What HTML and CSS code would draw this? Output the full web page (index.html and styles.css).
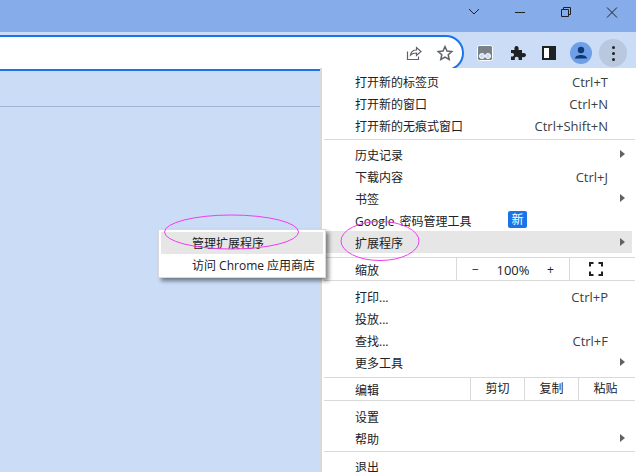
FILE: index.html
```html
<!DOCTYPE html>
<html lang="zh-CN">
<head>
    <meta charset="UTF-8">
    <title>扩展程序</title>
    <link rel="stylesheet" href="styles.css">
</head>

<body>
    <div class="titlebar">
        <svg class="win-icon" width="46" height="32" viewBox="0 0 46 32"><path d="M18 9l5 5 5-5" /></svg>
        <svg class="win-icon" width="46" height="32" viewBox="0 0 46 32"><path d="M18 12.500h10" /></svg>
        <svg class="win-icon" width="46" height="32" viewBox="0 0 46 32"><path d="M18.500 9.500h7v7h-7zM20.500 9.500v-2h7v7h-2" /></svg>
        <svg class="win-icon" width="46" height="32" viewBox="0 0 46 32"><path d="M18 7.500l10 10M28 7.500l-10 10" /></svg>
    </div>

    <div class="toolbar">
        <div class="omnibox">
            <svg class="omni-icon" width="18" height="18" viewBox="0 0 18 18"><path d="M3.500 7.500v8h11v-3M6.500 11c.5-3 3-5 6-5V3.500l4.500 4-4.500 4V9c-2.500 0-4.500.5-6 2z" /></svg>
            <svg class="omni-icon star" width="18" height="18" viewBox="0 0 18 18"><path d="M9 2.500l2 4.500 4.800.5-3.600 3.200 1 4.800L9 13l-4.200 2.500 1-4.800L2.200 7.500 7 7z" /></svg>
        </div>
        <div class="tools">
            <svg class="ext-tab" width="16" height="16" viewBox="0 0 16 16">
                <rect x="0.500" y="0.500" width="15" height="15" rx="2" fill="#7c8087" stroke="#fff" />
                <circle cx="5" cy="11" r="2.500" fill="#cadcf6" stroke="#fff" />
                <circle cx="11" cy="11" r="2.500" fill="#cadcf6" stroke="#fff" />
            </svg>
            <svg class="puzzle" width="16" height="16" viewBox="0 0 16 16"><path fill="#202124" d="M1 5h3.500C4 2.500 5 1 6.500 1S9 2.500 8.500 5H12v3.200c2.500-.6 4 .4 4 1.900s-1.500 2.500-4 1.900V15H8.500c.6-2.300-.4-3.200-1.800-3.200S4.300 12.700 5 15H1v-3.500c2 .4 3-.5 3-1.700S3 7.700 1 8.200z" /></svg>
            <div class="side-panel"></div>
            <div class="avatar">
                <svg width="22" height="22" viewBox="0 0 22 22"><circle cx="11" cy="8" r="3.200" fill="#0d3a74" /><path fill="#0d3a74" d="M5 16.500c0-2.500 3.500-3.500 6-3.500s6 1 6 3.500z" /></svg>
            </div>
            <div class="menu-btn"><span></span><span></span><span></span></div>
        </div>
    </div>

    <div class="content">
        <div class="content-line"></div>
    </div>

    <div class="menu">
        <div class="row row-top"><span>打开新的标签页</span><span class="key">Ctrl+T</span></div>
        <div class="row row-top"><span>打开新的窗口</span><span class="key">Ctrl+N</span></div>
        <div class="row row-top"><span>打开新的无痕式窗口</span><span class="key">Ctrl+Shift+N</span></div>
        <div class="sep"></div>
        <div class="row"><span>历史记录</span><i class="arrow"></i></div>
        <div class="row"><span>下载内容</span><span class="key">Ctrl+J</span></div>
        <div class="row"><span>书签</span><i class="arrow"></i></div>
        <div class="row"><span class="latin-label">Google 密码管理工具</span><span class="badge">新</span></div>
        <div class="row active"><span>扩展程序</span><i class="arrow"></i></div>
        <div class="sep sep-tight"></div>
        <div class="row split">
            <span class="split-label">缩放</span>
            <div class="zoom-ctrl"><span>−</span><span class="zoom-value">100%</span><span>+</span></div>
            <div class="fullscreen">
                <svg width="14" height="14" viewBox="0 0 14 14"><path d="M1 4.500V1h3.500M9.500 1H13v3.500M13 9.500V13H9.500M4.500 13H1V9.500" /></svg>
            </div>
        </div>
        <div class="sep sep-tight-top"></div>
        <div class="row"><span>打印...</span><span class="key">Ctrl+P</span></div>
        <div class="row"><span>投放...</span></div>
        <div class="row"><span>查找...</span><span class="key">Ctrl+F</span></div>
        <div class="row"><span>更多工具</span><i class="arrow"></i></div>
        <div class="sep sep-tight"></div>
        <div class="row split">
            <span class="split-label edit-label">编辑</span>
            <div class="edit-btn">剪切</div>
            <div class="edit-btn">复制</div>
            <div class="edit-btn">粘贴</div>
        </div>
        <div class="sep sep-tight-top"></div>
        <div class="row"><span>设置</span></div>
        <div class="row"><span>帮助</span><i class="arrow"></i></div>
        <div class="sep"></div>
        <div class="row"><span>退出</span></div>
    </div>

    <div class="submenu">
        <div class="sub-row sub-active">管理扩展程序</div>
        <div class="sub-row">访问 Chrome 应用商店</div>
    </div>

    <svg class="marks" width="636" height="472" viewBox="0 0 636 472">
        <ellipse cx="231.500" cy="232" rx="67" ry="17" />
        <ellipse cx="380" cy="241" rx="39" ry="19.500" />
    </svg>
</body>
</html>
```

FILE: styles.css
```css
html, body {
    height: 100%;
}

body {
    font-family: "Open Sans", "Noto Sans CJK SC", sans-serif;
    font-size: 12px;
    color: #202124;
    background: #cadcf6;
    margin: 0;
    overflow: hidden;
    position: relative;
}

.titlebar {
    height: 32px;
    background: #86acea;
    display: flex;
    justify-content: flex-end;
    padding-right: 1px;
}

.win-icon {
    display: block;
    fill: none;
    stroke: #202124;
    stroke-width: 1;
}

.toolbar {
    height: 36px;
    background: #cadcf6;
    display: flex;
    padding-top: 3px;
    box-sizing: border-box;
}

.omnibox {
    width: 464px;
    height: 36px;
    box-sizing: border-box;
    background: #fff;
    border: 2px solid #1a73e8;
    border-left: none;
    border-radius: 0 18px 18px 0;
    display: flex;
    justify-content: flex-end;
    align-items: center;
    gap: 14px;
    padding-right: 8px;
    flex-shrink: 0;
}

.omni-icon {
    fill: none;
    stroke: #5f6368;
    stroke-width: 1.2;
}

.star {
    stroke-width: 1.5;
}

.tools {
    display: flex;
    align-items: center;
    height: 36px;
    padding-left: 13px;
}

.ext-tab {
    margin-right: 17px;
}

.puzzle {
    margin-right: 16px;
}

.side-panel {
    width: 14px;
    height: 14px;
    box-sizing: border-box;
    background: #fff;
    border: 2px solid #202124;
    border-right-width: 7px;
    margin-right: 14px;
}

.avatar {
    width: 22px;
    height: 22px;
    border-radius: 50%;
    background: #6f9fe6;
    margin-right: 7px;
}

.avatar svg {
    display: block;
}

.menu-btn {
    width: 28px;
    height: 28px;
    border-radius: 50%;
    background: #b9c8de;
    display: flex;
    flex-direction: column;
    align-items: center;
    justify-content: center;
    gap: 3px;
}

.menu-btn span {
    width: 3px;
    height: 3px;
    border-radius: 50%;
    background: #202124;
}

.content {
    padding-top: 38px;
}

.content-line {
    height: 1px;
    background: #a3b4d0;
}

.menu {
    position: absolute;
    left: 320px;
    top: 68px;
    width: 316px;
    height: 404px;
    box-sizing: border-box;
    padding: 3px 0 0;
    background: #fff;
    border-left: 2px solid #d9d9d9;
    overflow: hidden;
}

.row {
    height: 22px;
    box-sizing: border-box;
    display: flex;
    align-items: center;
    justify-content: space-between;
    padding: 1px 28px 0 33px;
    white-space: nowrap;
    position: relative;
}

.row-top {
    padding-top: 0;
}

.active {
    background: #e6e6e6;
    margin-right: 4px;
    padding-right: 24px;
}

.key {
    font-size: 13px;
    color: #3c4043;
}

.latin-label {
    word-spacing: 2px;
}

.badge {
    position: absolute;
    left: 186px;
    top: 2px;
    width: 19px;
    height: 17px;
    border-radius: 2px;
    background: #1a73e8;
    color: #fff;
    text-align: center;
    line-height: 17px;
}

.arrow {
    position: absolute;
    right: 11px;
    top: 7px;
    width: 0;
    height: 0;
    border-left: 5px solid #5f6368;
    border-top: 4px solid transparent;
    border-bottom: 4px solid transparent;
}

.active .arrow {
    right: 7px;
}

.sep {
    height: 1px;
    margin: 2px 1px 3px 2px;
    background: #d9d9d9;
}

.sep-tight {
    margin: 4px 1px 0 2px;
}

.sep-tight-top {
    margin: 0 1px 4px 2px;
}

.split {
    padding: 0;
    justify-content: flex-start;
}

.split-label {
    width: 134px;
    padding: 1px 0 0 33px;
    box-sizing: border-box;
    flex-shrink: 0;
}

.zoom-ctrl {
    width: 114px;
    height: 22px;
    box-sizing: border-box;
    border-left: 1px solid #d9d9d9;
    border-right: 1px solid #d9d9d9;
    display: flex;
    align-items: center;
    justify-content: space-between;
    padding: 1px 15px 0 15px;
}

.zoom-value {
    font-size: 13px;
}

.fullscreen {
    flex: 1;
    display: flex;
    justify-content: center;
    padding-right: 14px;
}

.fullscreen svg {
    fill: none;
    stroke: #202124;
    stroke-width: 2;
}

.edit-label {
    width: 148px;
}

.edit-btn {
    width: 54px;
    height: 22px;
    box-sizing: border-box;
    border-left: 1px solid #d9d9d9;
    padding-top: 1px;
    text-align: center;
}

.submenu {
    position: absolute;
    left: 158px;
    top: 229px;
    width: 168px;
    height: 49px;
    box-sizing: border-box;
    padding: 2px;
    background: #fff;
    border: 1px solid #d9d9d9;
    box-shadow: 3px 3px 4px rgba(0, 0, 0, 0.45);
}

.sub-row {
    height: 22px;
    box-sizing: border-box;
    padding: 2px 0 0 31px;
    line-height: 20px;
    white-space: nowrap;
}

.sub-active {
    background: #e6e6e6;
}

.marks {
    position: absolute;
    left: 0;
    top: 0;
    fill: none;
    stroke: #f13cf1;
    stroke-width: 1;
    pointer-events: none;
}
```
